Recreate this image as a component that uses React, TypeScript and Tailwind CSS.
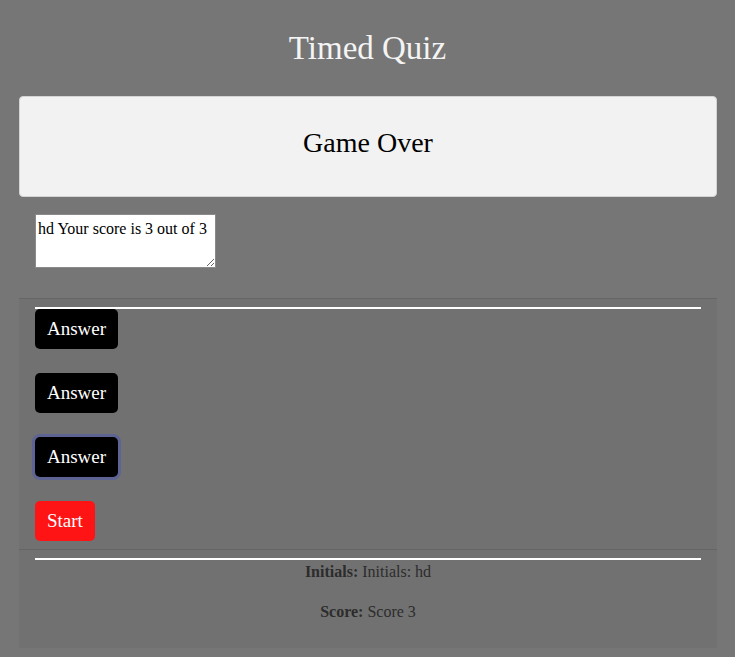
import React from "react";

const serif = { fontFamily: '"Liberation Serif", "Times New Roman", serif' };

export default function App() {
  return (
    <div className="min-h-[657px] w-full bg-[#767676] pb-[9px]" style={serif}>
      <h1 className="pt-[30px] text-center text-[33px] leading-[37px] text-[#f4f4f4]">Timed Quiz</h1>
      <div className="ml-[19px] mt-[29px] flex h-[101px] w-[698px] items-center justify-center rounded-[4px] border border-[#d4d4d4] bg-[#f2f2f2] pb-[7px]">
        <h2 className="text-[28px] leading-[32px] text-black">Game Over</h2>
      </div>
      <div className="ml-[35px] mt-[17px]">
        <textarea
          readOnly
          className="block h-[54px] w-[181px] resize border border-[#8a8a8a] bg-white px-[2px] pb-[1px] pt-[4px] text-[16px] leading-[19px] text-black outline-none"
          style={serif}
          defaultValue="hd Your score is 3 out of 3"
        />
      </div>
      <div className="ml-[19px] mt-[30px] w-[698px] border-t border-[#656565] bg-[#717171] px-[16px] pb-[8px] pt-[8px]">
        <div className="h-[2px] w-full bg-white" />
        <div className="flex flex-col items-start gap-[24px]">
          <button className="h-[40px] rounded-[5px] bg-black px-[12px] text-[19px] text-white" style={serif}>Answer</button>
          <button className="h-[40px] rounded-[5px] bg-black px-[12px] text-[19px] text-white" style={serif}>Answer</button>
          <button className="h-[40px] rounded-[5px] bg-black px-[12px] text-[19px] text-white ring-[3px] ring-[#5d6393]" style={serif}>Answer</button>
          <button className="h-[40px] rounded-[5px] bg-[#fe1414] px-[12px] text-[19px] text-white" style={serif}>Start</button>
        </div>
      </div>
      <div className="ml-[19px] w-[698px] border-t border-[#656565] bg-[#717171] px-[16px] pb-[24px] pt-[8px]">
        <div className="h-[2px] w-full bg-white" />
        <p className="text-center text-[16px] leading-[24px] text-[#2c2c2c]"><b>Initials:</b> Initials: hd</p>
        <p className="mt-[16px] text-center text-[16px] leading-[24px] text-[#2c2c2c]"><b>Score:</b> Score 3</p>
      </div>
    </div>
  );
}
